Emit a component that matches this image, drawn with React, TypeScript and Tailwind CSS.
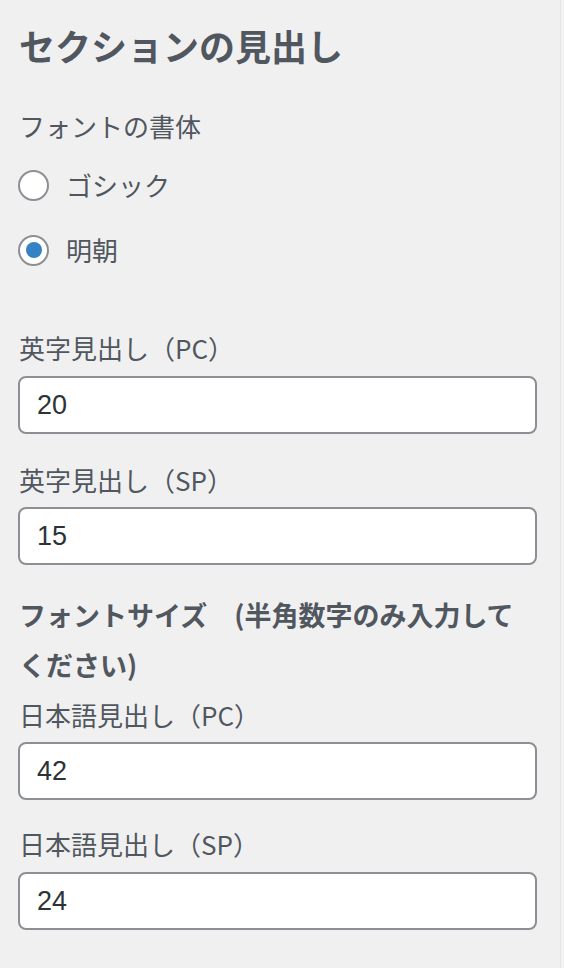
import React from "react";

const font = { fontFamily: '"Noto Sans CJK JP", "Noto Sans", sans-serif' };

function Label({ children, className = "" }: { children: React.ReactNode; className?: string }) {
  return (
    <div className={`text-[26px] leading-[36px] text-[#50575e] ${className}`}>{children}</div>
  );
}

function Input({ value, className = "" }: { value: string; className?: string }) {
  return (
    <div
      className={`h-[58px] w-[519px] rounded-[8px] border-2 border-[#8c8f94] bg-white pl-[17px] flex items-center font-['Liberation_Sans',sans-serif] text-[27px] text-[#2c3338] ${className}`}
    >
      {value}
    </div>
  );
}

function Radio({ checked, label, className = "" }: { checked?: boolean; label: string; className?: string }) {
  return (
    <div className={`flex items-center h-[36px] ${className}`}>
      <div className="ml-[-1px] flex h-[31px] w-[31px] items-center justify-center rounded-full border-2 border-[#8c8f94] bg-white">
        {checked && <div className="h-[16px] w-[16px] rounded-full bg-[#3582c4]" />}
      </div>
      <span className="ml-[17px] text-[26px] leading-[36px] text-[#50575e]">{label}</span>
    </div>
  );
}

export default function App() {
  return (
    <div style={font} className="flex h-[968px] w-[564px] bg-[#f0f0f1]">
      <div className="flex w-[560px] flex-col pl-[19px] pt-[23px]">
        <h3 className="text-[36px] font-bold leading-[44px] text-[#50575e]">セクションの見出し</h3>
        <Label className="mt-[41px]">フォントの書体</Label>
        <Radio label="ゴシック" className="mt-[23px]" />
        <Radio label="明朝" checked className="mt-[29px]" />
        <Label className="mt-[62px]">英字見出し（PC）</Label>
        <Input value="20" className="mt-[10px] ml-[-1px]" />
        <Label className="mt-[28px]">英字見出し（SP）</Label>
        <Input value="15" className="mt-[9px] ml-[-1px]" />
        <div className="mt-[25px] w-[519px] text-[27px] font-bold leading-[50px] text-[#50575e]">
          フォントサイズ　(半角数字のみ入力してください)
        </div>
        <Label className="mt-[7px]">日本語見出し（PC）</Label>
        <Input value="42" className="mt-[9px] ml-[-1px]" />
        <Label className="mt-[26px]">日本語見出し（SP）</Label>
        <Input value="24" className="mt-[10px] ml-[-1px]" />
      </div>
      <div className="w-[4px] border-l border-[#e6e6e6] bg-[#f3f3f3]" />
    </div>
  );
}
